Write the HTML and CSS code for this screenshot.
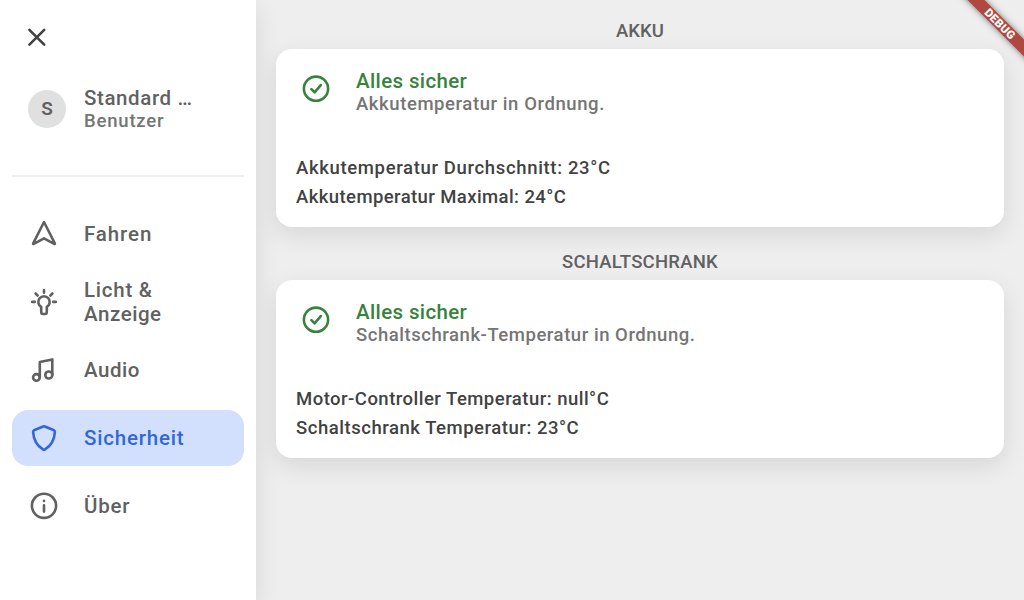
FILE: index.html
```html
<!DOCTYPE html>
<html lang="de">
<head>
<meta charset="utf-8">
<title>Sicherheit</title>
<link rel="stylesheet" href="styles.css">
</head>
<body>
<div class="app">
  <aside class="sidebar">
    <button class="close" aria-label="Schließen">
      <svg width="20" height="20" viewBox="0 0 20 20"><path d="M2.400 2.800 17.200 17.600M17.200 2.800 2.400 17.600"/></svg>
    </button>
    <div class="user">
      <div class="avatar">S</div>
      <div>
        <div class="user-name"><span class="t-name">Standard …</span></div>
        <div class="user-role"><span class="t-role">Benutzer</span></div>
      </div>
    </div>
    <nav class="nav">
      <a class="item"><svg class="icon" viewBox="0 0 32 32"><path d="M16 4 5.2 25.4Q4.9 26.3 5.8 25.9L16 20.4 26.2 25.9Q27.1 26.3 26.8 25.4Z"/></svg><span class="t-fahren">Fahren</span></a>
      <a class="item"><svg class="icon" viewBox="0 0 32 32"><path d="M13.2 20.9A5.7 5.7 0 1 1 18.8 20.9V26Q18.8 28 17 28H15Q13.2 28 13.2 26ZM16 4V6.7M7.6 7.5 9.6 9.5M24.4 7.5 22.4 9.5M4.2 15.9H6.8M25.2 15.9H27.8"/></svg><span><span class="t-licht">Licht &amp;</span><br><span class="t-anzeige">Anzeige</span></span></a>
      <a class="item"><svg class="icon" viewBox="0 0 32 32"><path d="M11.8 23.2V8L24.300 5.4V20.8"/><circle cx="8.4" cy="23.4" r="3.3"/><circle cx="20.800" cy="21" r="3.5"/></svg><span class="t-audio">Audio</span></a>
      <a class="item active"><svg class="icon" viewBox="0 0 32 32"><path d="M15.2 4.5Q16 4.1 16.8 4.5L26 8.3Q27 8.8 26.9 9.8C26.4 17.500 23.700 23.300 17 27.400Q16 28 15 27.400C8.300 23.300 5.600 17.500 5.100 9.8Q5 8.8 6 8.3Z"/></svg><span class="t-sicher">Sicherheit</span></a>
      <a class="item"><svg class="icon" viewBox="0 0 32 32"><circle cx="16" cy="15.800" r="12.1"/><path d="M16 15.200V21.600M16 10.700V10.900"/></svg><span class="t-uber">Über</span></a>
    </nav>
  </aside>
  <main class="main">
    <h2 class="heading"><span class="t-akku">AKKU</span></h2>
    <section class="card">
      <div class="status">
        <svg class="icon" viewBox="0 0 32 32"><circle cx="16" cy="15.700" r="12.100"/><path d="M11.400 16.100 14.600 19.400 20.800 12.100"/></svg>
        <div>
          <div class="status-title"><span class="t-alles">Alles sicher</span></div>
          <div class="status-text"><span class="t-ordnung">Akkutemperatur in Ordnung.</span></div>
        </div>
      </div>
      <div class="value"><span class="t-avg">Akkutemperatur Durchschnitt: 23°C</span></div>
      <div class="value"><span class="t-max">Akkutemperatur Maximal: 24°C</span></div>
    </section>
    <h2 class="heading"><span class="t-schrank">SCHALTSCHRANK</span></h2>
    <section class="card">
      <div class="status">
        <svg class="icon" viewBox="0 0 32 32"><circle cx="16" cy="15.700" r="12.100"/><path d="M11.400 16.100 14.600 19.400 20.800 12.100"/></svg>
        <div>
          <div class="status-title"><span class="t-alles">Alles sicher</span></div>
          <div class="status-text"><span class="t-ordnung2">Schaltschrank-Temperatur in Ordnung.</span></div>
        </div>
      </div>
      <div class="value"><span class="t-motor">Motor-Controller Temperatur: null°C</span></div>
      <div class="value"><span class="t-schrank2">Schaltschrank Temperatur: 23°C</span></div>
    </section>
  </main>
  <div class="debug">DEBUG</div>
</div>
</body>
</html>
```
FILE: styles.css
```css
* { box-sizing: border-box; }
body {
  margin: 0;
  font-family: Roboto, "Liberation Sans", sans-serif;
  font-weight: 500;
  color: #616161;
}
.app {
  position: relative;
  display: flex;
  width: 1024px;
  height: 600px;
  overflow: hidden;
  background: #eee;
}
.sidebar {
  width: 256px;
  padding: 0 12px;
  background: #fff;
  box-shadow: 0 8px 24px rgba(0, 0, 0, .1);
}
.close {
  display: block;
  margin: 27px 0 0 15px;
  padding: 0;
  width: 20px;
  height: 20px;
  border: 0;
  background: none;
}
svg {
  display: block;
  fill: none;
  stroke: currentColor;
  stroke-width: 2.600;
  stroke-linecap: round;
  stroke-linejoin: round;
}
.close svg { color: #424242; }
.user {
  display: flex;
  gap: 18px;
  height: 130px;
  padding: 39px 16px 0;
  border-bottom: 2px solid #eee;
}
.avatar {
  width: 38px;
  height: 38px;
  margin-top: 4px;
  border-radius: 50%;
  background: #e0e0e0;
  font-size: 19px;
  font-weight: 600;
  line-height: 38px;
  text-align: center;
}
.user-name { font-size: 20.5px; line-height: 24px; }
.user-role { font-size: 18.5px; line-height: 22px; color: #757575; }
.nav {
  display: flex;
  flex-direction: column;
  gap: 12px;
  margin-top: 29px;
}
.item {
  display: flex;
  align-items: center;
  gap: 24px;
  height: 56px;
  padding: 0 16px;
  border-radius: 16px;
  font-size: 20.5px;
  line-height: 24px;
}
.item.active { background: #d2e0fe; color: #3367d6; }
.icon { flex: none; width: 32px; height: 32px; }
.main { flex: 1; padding: 0 20px; }
.heading {
  margin: 0;
  padding-top: 20px;
  height: 49px;
  font-size: 18.5px;
  font-weight: 500;
  line-height: 22px;
  text-align: center;
}
.card {
  height: 178px;
  margin-bottom: 4px;
  padding: 20px;
  border-radius: 16px;
  background: #fff;
  box-shadow: 0 8px 24px rgba(0, 0, 0, .1);
}
.status {
  display: flex;
  gap: 24px;
  height: 85px;
  padding-left: 4px;
}
.status .icon { margin-top: 4px; color: #37833c; }
.status-title { font-size: 20.5px; line-height: 24px; color: #37833c; }
.status-text { font-size: 18.5px; line-height: 22px; color: #757575; }
.value { font-size: 18.5px; line-height: 29px; color: #424242; }

/* Tracking per label */
.t-name { letter-spacing: .6px; }
.t-role { letter-spacing: .8px; }
.t-fahren { letter-spacing: .9px; }
.t-licht { letter-spacing: .75px; }
.t-anzeige { letter-spacing: .55px; }
.t-audio { letter-spacing: .5px; }
.t-sicher { letter-spacing: .8px; }
.t-uber { letter-spacing: .8px; }
.t-akku { letter-spacing: .1px; }
.t-alles { letter-spacing: .37px; }
.t-ordnung { letter-spacing: .58px; }
.t-avg { letter-spacing: .65px; }
.t-max { letter-spacing: .41px; }
.t-schrank { letter-spacing: .24px; }
.t-ordnung2 { letter-spacing: .54px; }
.t-motor { letter-spacing: .48px; }
.t-schrank2 { letter-spacing: .53px; }

.debug {
  position: absolute;
  top: 18px;
  right: -36px;
  width: 120px;
  height: 12px;
  transform: rotate(45deg);
  background: #b0483f;
  box-shadow: 0 0 6px rgba(0, 0, 0, .5);
  color: #fff;
  font-size: 11.500px;
  font-weight: 900;
  letter-spacing: .3px;
  line-height: 12px;
  text-align: center;
}
```
